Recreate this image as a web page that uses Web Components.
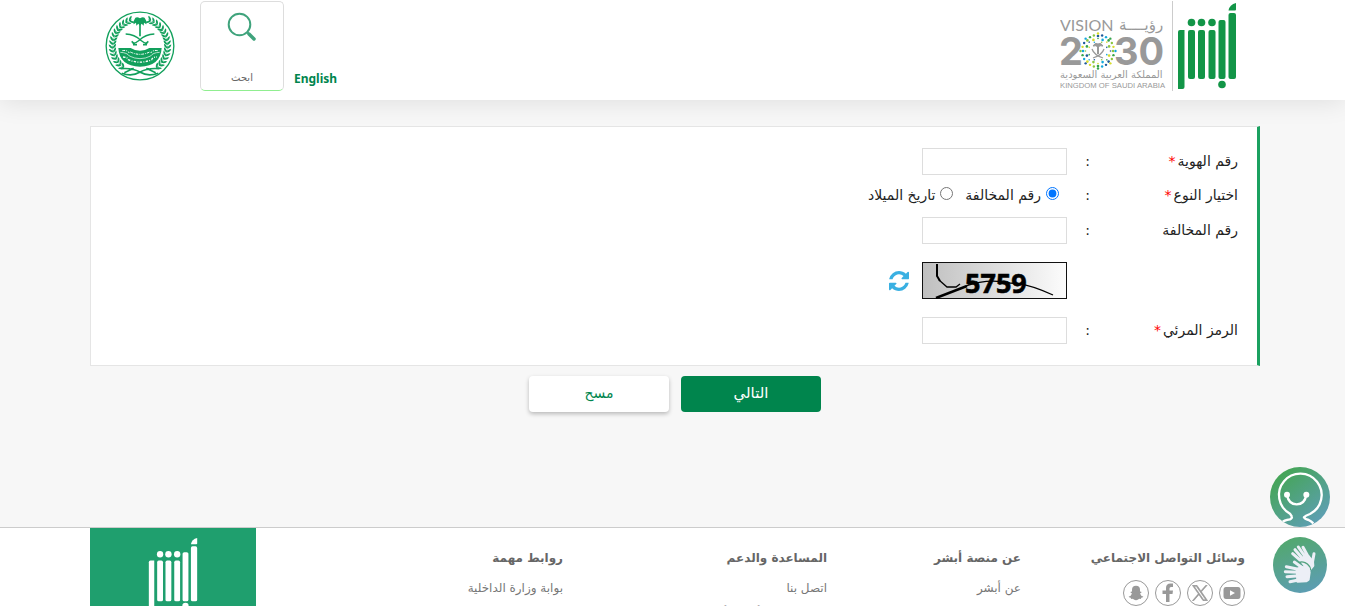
<!DOCTYPE html>
<html lang="ar" dir="rtl">
<head>
<meta charset="utf-8">
<meta name="viewport" content="width=device-width, initial-scale=1">
<title>أبشر</title>
<style>
html {
    scrollbar-width: none;
}

body {
    margin: 0;
    background: #f7f7f7;
    color: #333;
    font-family: "Noto Sans", "DejaVu Sans", sans-serif;
    font-size: 14px;
}
</style>
</head>
<body>
<site-header>
    <absher-logo slot="brand"></absher-logo>
    <vision-logo slot="brand"></vision-logo>
    <language-link slot="tools" href="#en">English</language-link>
    <search-tile slot="tools">ابحث</search-tile>
    <ministry-emblem slot="tools"></ministry-emblem>
</site-header>

<inquiry-form>
    <form-card>
        <text-field label="رقم الهوية" required></text-field>
        <type-choice label="اختيار النوع"></type-choice>
        <text-field label="رقم المخالفة"></text-field>
        <captcha-row></captcha-row>
        <text-field label="الرمز المرئي" required></text-field>
    </form-card>
    <action-button slot="actions" kind="primary">التالي</action-button>
    <action-button slot="actions">مسح</action-button>
</inquiry-form>

<site-footer>
    <footer-column heading="وسائل التواصل الاجتماعي"><social-links></social-links></footer-column>
    <footer-column heading="عن منصة أبشر"><footer-link>عن أبشر</footer-link></footer-column>
    <footer-column heading="المساعدة والدعم">
        <footer-link>اتصل بنا</footer-link>
        <footer-link>مواقع تركيب أجهزة أبشر</footer-link>
    </footer-column>
    <footer-column heading="روابط مهمة"><footer-link>بوابة وزارة الداخلية</footer-link></footer-column>
    <footer-brand></footer-brand>
</site-footer>

<floating-tools></floating-tools>

<script>
class SiteHeader extends HTMLElement {
    constructor(){
        super();
        this.attachShadow({mode: "open"}).innerHTML = `
        <style>
        :host {
            display: block;
            position: relative;
            background: #fff;
            box-shadow: 0 2px 24px rgba(0, 0, 0, 0.1);
        }
        header {
            display: flex;
            justify-content: space-between;
            min-height: 99px;
            padding: 1px 108px 0 105px;
        }
        .brand {
            display: flex;
            gap: 4px;
        }
        .tools {
            display: flex;
            align-items: flex-start;
        }
        </style>
        <header>
            <div class="brand"><slot name="brand"></slot></div>
            <div class="tools"><slot name="tools"></slot></div>
        </header>
        `;
    }
}
customElements.define("site-header", SiteHeader);

class AbsherLogo extends HTMLElement {
    constructor(){
        super();
        this.attachShadow({mode: "open"}).innerHTML = `
        <style>
        :host {
            display: block;
            color: #129547;
            width: 60px;
            padding-top: 2px;
        }
        svg {
            display: block;
            width: 100%;
        }
        </style>
        <svg viewBox="0 0 60 88" fill="currentColor" role="img" aria-label="أبشر">
            <path d="M1 29q0-2 2-2h4.500v57q0 2-2 2H1z"/>
            <rect x="11" y="27" width="7" height="49" rx="2"/>
            <rect x="21" y="27" width="7" height="49" rx="2"/>
            <rect x="31.500" y="27" width="7" height="49" rx="2"/>
            <rect x="41.500" y="17" width="7" height="59" rx="2"/>
            <rect x="51.500" y="10" width="7.500" height="66" rx="2"/>
            <path d="M51.500 7.500Q52.500 1.500 59 0v6.500q0 1-1 1z"/>
            <circle cx="14.500" cy="19.500" r="3.800"/>
            <circle cx="24.500" cy="19.500" r="3.800"/>
            <circle cx="35" cy="19.500" r="3.800"/>
            <circle cx="45" cy="81.500" r="3.800"/>
        </svg>
        `;
    }
}
customElements.define("absher-logo", AbsherLogo);

class VisionLogo extends HTMLElement {
    constructor(){
        super();
        this.attachShadow({mode: "open"}).innerHTML = `
        <style>
        :host {
            display: block;
            height: 90px;
            border-right: 1px solid #ccc;
            padding-right: 6px;
        }
        svg {
            display: block;
            direction: ltr;
            fill: #999;
        }
        </style>
        <svg width="106" height="90" viewBox="0 0 106 90" role="img">
            <text x="0" y="30" font-family="Lato" font-size="16">VISION</text>
            <text x="59" y="29" font-family="DejaVu Sans" font-size="15">رؤيــــة</text>
            <g font-family="Inter" font-weight="700" font-size="38">
                <text x="-1" y="64">2</text>
                <text x="54" y="64">30</text>
            </g>
            <g transform="translate(38 50)">${this.star()}</g>
            <path d="M37 45h2v8h-2z"/>
            <path d="M33 45q2-4 5-2 3-2 5 2-3-1-5 1-2-2-5-1z" stroke="#999"/>
            <path d="M32 48q2 6 11 9M44 48q-2 6-11 9" stroke="#999" fill="none" stroke-width="1.300"/>
            <text x="0" y="77" font-family="DejaVu Sans" font-size="10">المملكة العربية السعودية</text>
            <text x="0" y="87" font-family="Liberation Sans" font-size="7.700">KINGDOM OF SAUDI ARABIA</text>
        </svg>
        `;
    }

    // rings of coloured dots with eight points
    star() {
        const colors = ["#1d5a9c", "#8cc63f", "#12a8dc", "#d8dc2a", "#35a44c"];
        let dots = "";
        [[9.5, 16, 0.8], [12, 16, 1.3], [14.5, 24, 1.2]].forEach(([radius, count, size], ring) => {
            for (let i = 0; i < count; i++) {
                const angle = i * Math.PI * 2 / count;
                const reach = radius + Math.abs(Math.cos(angle * 4)) * 3;
                dots += `<circle cx="${(Math.cos(angle) * reach).toFixed(2)}" cy="${(Math.sin(angle) * reach).toFixed(2)}" r="${size}" fill="${colors[(i * 2 + ring) % 5]}"/>`;
            }
        });
        return dots;
    }
}
customElements.define("vision-logo", VisionLogo);

class LanguageLink extends HTMLElement {
    constructor(){
        super();
        this.attachShadow({mode: "open"}).innerHTML = `
        <style>
        :host {
            display: block;
            padding: 69px 0 0 10px;
        }
        a {
            display: block;
            color: #00854d;
            font: bold 12px/18px "Noto Sans", sans-serif;
            text-decoration: none;
        }
        </style>
        <a href="${this.getAttribute("href")}"><slot></slot></a>
        `;
    }
}
customElements.define("language-link", LanguageLink);

class SearchTile extends HTMLElement {
    constructor(){
        super();
        this.attachShadow({mode: "open"}).innerHTML = `
        <style>
        :host {
            display: block;
        }
        button {
            display: flex;
            flex-direction: column;
            align-items: center;
            justify-content: space-between;
            box-sizing: border-box;
            width: 84px;
            height: 90px;
            padding: 10px 0 4px;
            border: 1px solid #ddd;
            border-bottom-color: #90ee90;
            border-radius: 5px;
            background: #fff;
            color: #666;
            font: 10px/16px "DejaVu Sans", sans-serif;
            cursor: pointer;
        }
        </style>
        <button type="button">
            <svg width="30" height="30" viewBox="0 0 30 30" fill="none" stroke="#3fa37c">
                <circle cx="12.500" cy="12.500" r="10.800" stroke-width="2"/>
                <path d="M20.500 20.500l2 2" stroke-width="2"/>
                <path d="M22 22l5 5" stroke-width="3.500" stroke-linecap="round"/>
            </svg>
            <slot></slot>
        </button>
        `;
    }
}
customElements.define("search-tile", SearchTile);

class MinistryEmblem extends HTMLElement {
    constructor(){
        super();
        this.attachShadow({mode: "open"}).innerHTML = `
        <style>
        :host {
            display: block;
            padding-top: 10px;
            margin-right: 25px;
        }
        svg {
            display: block;
        }
        </style>
        <svg width="70" height="70" viewBox="0 0 210 210" fill="none" stroke="#12a05c" role="img">
            <circle cx="105" cy="105" r="101.500" stroke-width="4"/>
            ${this.leaves()}
            <path d="M105 30v46" stroke-width="5"/>
            <path d="M105 22q-13-8-17 4-5 5-2 14l7-5 1 9 6-6 5 6 5-6 6 6 1-9 7 5q3-9-2-14-4-12-17-4z" fill="#12a05c" stroke="none"/>
            <path d="M62 69q27 1 45 19 9 8 20 10M148 69q-27 1-45 19-9 8-20 10" stroke-width="4"/>
            <path d="M80 91l9 8M130 91l-9 8M84 101h12M114 101h12" stroke-width="5"/>
            <path d="M40 111q3 54 65 56 62-2 65-56h-37q-12 8-28 8t-28-8z" fill="#12a05c" stroke="none"/>
            <path d="M46 124q21 1 27 11 32 16 64 0 6-10 27-11" stroke="#fff" stroke-width="2"/>
            <path d="M54 138q13 0 16 8 35 15 70 0 3-8 16-8" stroke="#fff" stroke-width="4" stroke-dasharray="7 4 3 4"/>
            <path d="M52 119q14-3 21 7M76 123q29 14 58 0M158 119q-14-3-21 7" stroke="#fff" stroke-width="3" stroke-dasharray="8 3 3 3"/>
            <path d="M48 173q35-3 58 11t54 3M162 173q-35-3-58 11t-54 3M58 185l28-13M152 185l-28-13" stroke-width="5"/>
        </svg>
        `;
    }

    // leaves up each side of the ring, mirrored
    leaves() {
        let paths = "";
        for (let deg = 36; deg < 160; deg += 8) {
            [1, -1].forEach(side => {
                const angle = (90 + side * deg) * Math.PI / 180;
                const x = 105 + Math.cos(angle) * 82;
                const y = 105 + Math.sin(angle) * 82;
                const turn = side * deg + (side > 0 ? 180 : 0);
                paths += `<path d="M0 0q4-11 14-11-3 10-14 11zM0 0q4 11 14 11-3-10-14-11zM-2 0q8-3 12 0-4 3-12 0z" stroke="none" fill="#12a05c" transform="translate(${x.toFixed(1)} ${y.toFixed(1)}) rotate(${turn})"/>`;
            });
        }
        return paths;
    }
}
customElements.define("ministry-emblem", MinistryEmblem);

class InquiryForm extends HTMLElement {
    constructor(){
        super();
        this.attachShadow({mode: "open"}).innerHTML = `
        <style>
        :host {
            display: block;
        }
        main {
            padding: 26px 85px 115px 90px;
        }
        .actions {
            display: flex;
            justify-content: center;
            gap: 12px;
            padding-top: 10px;
        }
        </style>
        <main>
            <slot></slot>
            <div class="actions"><slot name="actions"></slot></div>
        </main>
        `;
    }
}
customElements.define("inquiry-form", InquiryForm);

class FormCard extends HTMLElement {
    constructor(){
        super();
        this.attachShadow({mode: "open"}).innerHTML = `
        <style>
        :host {
            display: block;
            padding: 21px 19px;
            border: 1px solid #e5e5e5;
            border-right: 3px solid #1ba160;
            background: #fff;
        }
        </style>
        <slot></slot>
        `;
    }
}
customElements.define("form-card", FormCard);

// columns shared by every row of the form
const rowStyle = `
        :host {
            display: block;
        }
        .row {
            display: grid;
            grid-template-columns: 148px 23px 1fr;
            align-items: center;
            min-height: 27px;
            font: 14px/20px "DejaVu Sans", sans-serif;
            color: #222;
        }
        .title,
        .colon {
            padding-bottom: 2px;
        }
        .star {
            color: #f00;
            padding-right: 2px;
        }
`;

class TextField extends HTMLElement {
    constructor(){
        super();
        const star = this.hasAttribute("required") ? `<span class="star">*</span>` : "";
        this.attachShadow({mode: "open"}).innerHTML = `
        <style>
        ${rowStyle}
        input {
            display: block;
            box-sizing: border-box;
            width: 145px;
            height: 27px;
            border: 1px solid #ddd;
            background: #fff;
        }
        </style>
        <div class="row">
            <label class="title" for="field">${this.getAttribute("label")}${star}</label>
            <span class="colon">:</span>
            <input id="field" type="text">
        </div>
        `;
    }
}
customElements.define("text-field", TextField);

class TypeChoice extends HTMLElement {
    constructor(){
        super();
        this.attachShadow({mode: "open"}).innerHTML = `
        <style>
        ${rowStyle}
        .row {
            min-height: 42px;
        }
        .options {
            display: flex;
            align-items: center;
            gap: 12px;
            padding: 0 8px 2px 0;
        }
        .options label {
            display: flex;
            gap: 5px;
        }
        input {
            width: 13px;
            height: 13px;
            margin: 2px 0;
        }
        </style>
        <div class="row" role="radiogroup" aria-labelledby="title">
            <span class="title" id="title">${this.getAttribute("label")}<span class="star">*</span></span>
            <span class="colon">:</span>
            <div class="options">
                <label><input type="radio" name="type" checked>رقم المخالفة</label>
                <label><input type="radio" name="type">تاريخ الميلاد</label>
            </div>
        </div>
        `;
    }
}
customElements.define("type-choice", TypeChoice);

class CaptchaRow extends HTMLElement {
    constructor(){
        super();
        this.attachShadow({mode: "open"}).innerHTML = `
        <style>
        :host {
            display: block;
        }
        .captcha {
            display: flex;
            align-items: center;
            gap: 13px;
            padding: 18px 171px 18px 0;
        }
        .code {
            display: block;
            direction: ltr;
        }
        button {
            width: 20px;
            height: 20px;
            padding: 0;
            border: 0;
            background: none;
            cursor: pointer;
        }
        button svg {
            display: block;
        }
        </style>
        <div class="captcha">
            <svg class="code" width="145" height="37" viewBox="0 0 145 37" role="img">
                <defs>
                    <linearGradient id="fade"><stop offset="0" stop-color="#bfbfbf"/><stop offset="1" stop-color="#fcfcfc"/></linearGradient>
                </defs>
                <rect x="0.500" y="0.500" width="144" height="36" fill="url(#fade)" stroke="#111"/>
                <text x="43" y="31" font-family="Open Sans" font-weight="700" font-size="27" stroke="#000" stroke-width="0.600">5759</text>
                <g fill="none" stroke="#000">
                    <path d="M15 2v12l3 5" stroke-width="2"/>
                    <path d="M17 18l8 7h9l4-3" stroke-width="1.300"/>
                    <path d="M14 36l31-12" stroke-width="2.500"/>
                    <path d="M44 24q22-8 44-3 17 0 43 12" stroke-width="1.300"/>
                </g>
            </svg>
            <button type="button" aria-label="تحديث">
                <svg width="20" height="20" viewBox="0 0 1536 1536" fill="#3ab0e2">
                    <path d="M1511 928q0 5-1 7-64 268-268 434.500T764 1536q-146 0-282.500-55T238 1324l-129 129q-19 19-45 19t-45-19-19-45V960q0-26 19-45t45-19h448q26 0 45 19t19 45-19 45l-137 137q71 66 161 102t187 36q134 0 250-65t186-179q11-17 53-117 8-23 30-23h192q13 0 22.500 9.500t9.500 22.500zm25-800v448q0 26-19 45t-45 19h-448q-26 0-45-19t-19-45 19-45l138-138Q969 256 768 256q-134 0-250 65T332 500q-11 17-53 117-8 23-30 23H50q-13 0-22.500-9.500T18 608v-7q65-268 270-434.500T768 0q146 0 284 55.500T1297 212l130-129q19-19 45-19t45 19 19 45z"/>
                </svg>
            </button>
        </div>
        `;
    }
}
customElements.define("captcha-row", CaptchaRow);

class ActionButton extends HTMLElement {
    constructor(){
        super();
        this.attachShadow({mode: "open"}).innerHTML = `
        <style>
        :host {
            display: block;
        }
        button {
            display: block;
            width: 140px;
            height: 36px;
            padding: 0 0 2px;
            border: 0;
            border-radius: 4px;
            background: #fff;
            color: #00854d;
            font: 14px/20px "DejaVu Sans", sans-serif;
            box-shadow: 0 2px 4px rgba(0, 0, 0, 0.25);
            cursor: pointer;
        }
        :host([kind="primary"]) button {
            background: #00854d;
            color: #fff;
            font-size: 15px;
            box-shadow: none;
        }
        </style>
        <button type="button"><slot></slot></button>
        `;
    }
}
customElements.define("action-button", ActionButton);

class SiteFooter extends HTMLElement {
    constructor(){
        super();
        this.attachShadow({mode: "open"}).innerHTML = `
        <style>
        :host {
            display: block;
            border-top: 1px solid #ccc;
            background: #fff;
        }
        footer {
            display: grid;
            grid-template-columns: 224fr 194fr 264fr 307fr 166px;
            padding: 0 100px 0 90px;
        }
        </style>
        <footer><slot></slot></footer>
        `;
    }
}
customElements.define("site-footer", SiteFooter);

class FooterColumn extends HTMLElement {
    constructor(){
        super();
        this.attachShadow({mode: "open"}).innerHTML = `
        <style>
        :host {
            display: block;
            padding-top: 20px;
        }
        h2 {
            margin: 0 0 10px;
            color: #666;
            font: bold 12px/20px "DejaVu Sans", sans-serif;
            white-space: nowrap;
        }
        </style>
        <h2>${this.getAttribute("heading")}</h2>
        <slot></slot>
        `;
    }
}
customElements.define("footer-column", FooterColumn);

class FooterLink extends HTMLElement {
    constructor(){
        super();
        this.attachShadow({mode: "open"}).innerHTML = `
        <style>
        :host {
            display: block;
            margin-bottom: 5px;
        }
        a {
            display: block;
            color: #777;
            font: 12px/20px "DejaVu Sans", sans-serif;
            text-decoration: none;
        }
        </style>
        <a href="#"><slot></slot></a>
        `;
    }
}
customElements.define("footer-link", FooterLink);

class SocialLinks extends HTMLElement {
    constructor(){
        super();
        this.attachShadow({mode: "open"}).innerHTML = `
        <style>
        :host {
            display: flex;
            gap: 6px;
            padding-top: 2px;
        }
        a {
            display: grid;
            place-items: center;
            box-sizing: border-box;
            width: 26px;
            height: 26px;
            border: 1px solid #999;
            border-radius: 50%;
        }
        svg {
            fill: #999;
        }
        </style>
        <a href="#" aria-label="YouTube"><svg width="18" height="18" viewBox="0 0 18 18"><path fill-rule="evenodd" d="M3 3h12q2.500 0 2.500 3v6q0 3-2.500 3H3Q.5 15 .5 12V6q0-3 2.500-3zm4 3.200v5.600L12 9z"/></svg></a>
        <a href="#" aria-label="X"><svg width="16" height="16" viewBox="0 0 24 24"><path stroke="#999" d="M14.200 10.200L22.700.5h-2l-7.400 8.400L7.400.5H.6l8.900 12.800L.6 23.500h2l7.800-9 6.200 9h6.800zm-2.800 3.200l-.9-1.300L3.300 2h3.100l5.800 8.200.9 1.300 7.500 10.600h-3.100z"/></svg></a>
        <a href="#" aria-label="Facebook"><svg width="18" height="20" viewBox="0 0 18 20"><path d="M7 19v-8H3.500V7.500H7V5q0-4.500 4.500-4.500H14V4h-2q-1.500 0-1.500 1.500v2H14l-.5 3.500h-3v8z"/></svg></a>
        <a href="#" aria-label="Snapchat"><svg width="16" height="16" viewBox="0 0 16 16"><path d="M8 .8q4 0 4 4v2q1-.5 1.500.2.300.8-1.500 1.500.8 2.500 3.300 3 .2 1-2 1.300l-.4 1.100q-2-.3-2.800.5-1 .8-2.100.8t-2.100-.8q-.8-.8-2.800-.5l-.4-1.100Q.5 12.500.7 11.500q2.500-.5 3.300-3-1.800-.7-1.500-1.500Q3 6.300 4 6.800v-2q0-4 4-4z"/></svg></a>
        `;
    }
}
customElements.define("social-links", SocialLinks);

class FooterBrand extends HTMLElement {
    constructor(){
        super();
        this.attachShadow({mode: "open"}).innerHTML = `
        <style>
        :host {
            display: flex;
            justify-content: center;
            padding: 8px 0 20px;
            background: #1f9f6e;
        }
        absher-logo {
            width: 50px;
            color: #fff;
        }
        </style>
        <absher-logo></absher-logo>
        `;
    }
}
customElements.define("footer-brand", FooterBrand);

class FloatingTools extends HTMLElement {
    constructor(){
        super();
        this.attachShadow({mode: "open"}).innerHTML = `
        <style>
        :host {
            position: fixed;
            right: 15px;
            bottom: 13px;
            display: flex;
            flex-direction: column;
            align-items: center;
            gap: 10px;
        }
        button {
            display: block;
            padding: 0;
            border: 0;
            background: none;
            cursor: pointer;
        }
        svg {
            display: block;
        }
        </style>
        <button type="button" aria-label="المساعد">
            <svg width="60" height="60" viewBox="0 0 180 180">
                <defs>
                    <linearGradient id="shade" x1="0.200" y1="0.100" x2="0.850" y2="0.900"><stop offset="0" stop-color="#45a557"/><stop offset="1" stop-color="#5e9fb4"/></linearGradient>
                    <clipPath id="disc"><circle cx="90" cy="90" r="90"/></clipPath>
                </defs>
                <circle cx="90" cy="90" r="90" fill="url(#shade)"/>
                <g clip-path="url(#disc)" fill="none" stroke="#fff" stroke-width="7">
                    <path d="M34 168q8-9 26-11 8-4 5-9-1-3-5-8A64 64 0 1 1 120 141q-14 5-18 10 2 5 14 8 8 4 14 10"/>
                    <path d="M51 84q5 28 29 28t29-28"/>
                </g>
                <circle cx="51" cy="83" r="9" fill="#fff"/>
                <circle cx="109" cy="83" r="9" fill="#fff"/>
            </svg>
        </button>
        <button type="button" aria-label="لغة الإشارة">
            <svg width="54" height="56" viewBox="0 0 162 168">
                <defs>
                    <linearGradient id="dusk" x1="0.300" y1="0" x2="0.650" y2="1"><stop offset="0" stop-color="#52a86d"/><stop offset="1" stop-color="#5d9db4"/></linearGradient>
                </defs>
                <ellipse cx="81" cy="84" rx="81" ry="84" fill="url(#dusk)"/>
                <g fill="none" stroke="#eceff6" stroke-linecap="round" stroke-linejoin="round">
                    <path d="M82 70L59 50M88 64L66 38M97 60L76 30M106 60L90 31M118 78l5-28" stroke-width="9"/>
                    <path d="M82 68l14-9 10-1 13 16 1 12-8 10-8 2-10-14z" fill="#eceff6" stroke-width="8"/>
                </g>
                <path d="M72 84q8-14 24-7 16 8 17 22" fill="none" stroke="#52a27e" stroke-width="4"/>
                <g fill="none" stroke="#eceff6" stroke-linecap="round" stroke-linejoin="round">
                    <path d="M76 97L40 89M76 106L37 104M78 116l-36 3M80 128l-29 6M88 92L64 75" stroke-width="9"/>
                    <path d="M72 98l12-8 22 4 3 12-3 22-7 4-25 1z" fill="#eceff6" stroke-width="8"/>
                </g>
            </svg>
        </button>
        `;
    }
}
customElements.define("floating-tools", FloatingTools);
</script>
</body>
</html>
